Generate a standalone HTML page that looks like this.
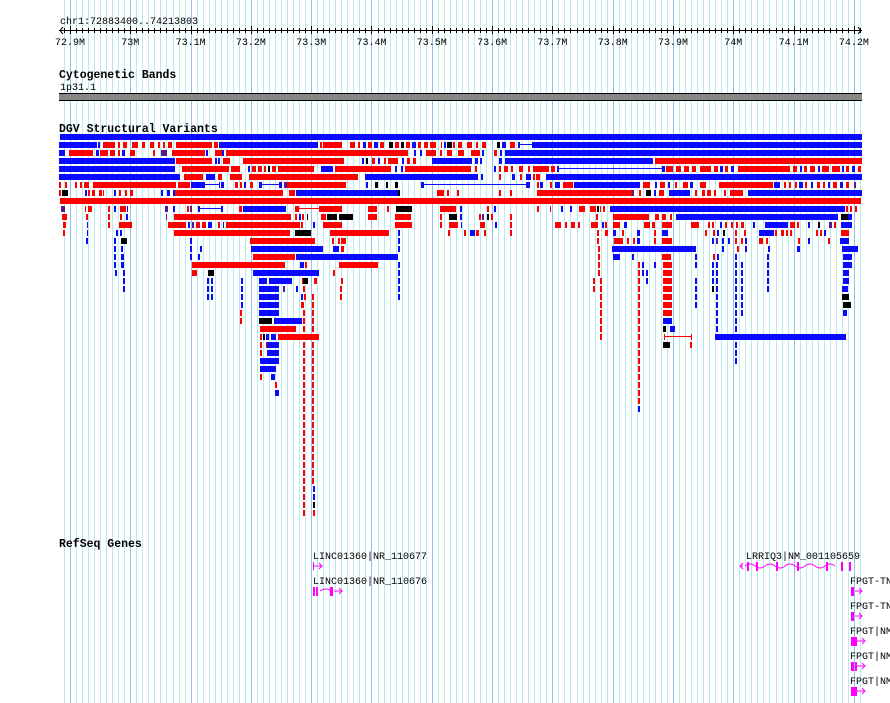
<!DOCTYPE html>
<html><head><meta charset="utf-8">
<style>
html,body{margin:0;padding:0;background:#fff;}
#wrap{position:relative;width:890px;height:703px;overflow:hidden;background:#fff;}
svg{position:absolute;left:0;top:0;}
.t{font-family:"Liberation Mono",monospace;font-size:10px;fill:#000;}
.b{font-family:"Liberation Mono",monospace;font-size:11.5px;font-weight:bold;fill:#000;}
</style></head><body>
<div id="wrap">
<svg id="g" width="890" height="703" xmlns="http://www.w3.org/2000/svg">
<g id="grid"></g>
<g id="bars"></g>
<g id="ruler"></g>
<text class="t" x="60" y="24">chr1:72883400..74213803</text>
<g id="lbl"></g>
<text class="b" x="59" y="78">Cytogenetic Bands</text>
<text class="t" x="60" y="90">1p31.1</text>
<rect x="59" y="93" width="803" height="7" fill="#888"/>
<rect x="59" y="93" width="803" height="1" fill="#000"/>
<rect x="59" y="100" width="803" height="1" fill="#000"/>
<text class="b" x="59" y="132">DGV Structural Variants</text>
<text class="b" x="59" y="547">RefSeq Genes</text>
<text class="t" x="313" y="559">LINC01360|NR_110677</text>
<text class="t" x="313" y="584">LINC01360|NR_110676</text>
<text class="t" x="746" y="559">LRRIQ3|NM_001105659</text>
<text class="t" x="850" y="584">FPGT-TNNI3K</text>
<text class="t" x="850" y="609">FPGT-TNNI3K</text>
<text class="t" x="850" y="634">FPGT|NM_1</text>
<text class="t" x="850" y="659">FPGT|NM_1</text>
<text class="t" x="850" y="684">FPGT|NM_1</text>
<g fill="none" stroke="#f0f" stroke-width="1">
<path d="M313.5 562v8M313 566h9M319 563l3 3-3 3"/>
<path d="M320 591q6-4 11 0M334 591h8M339 588l3 3-3 3"/>
<path d="M740 566h3M740 566l3-3M740 566l3 3M745 566q5-4 10 0q5 4 10 0q5-4 10 0q5 4 10 0q5-4 10 0q5 4 10 0q5-4 10 0q5 4 10 0q5-4 10 0"/>
<path d="M855 591h7M859 588l3 3-3 3M855 616h7M859 613l3 3-3 3M856 641h9M862 638l3 3-3 3M856 666h9M862 663l3 3-3 3M856 691h9M862 688l3 3-3 3"/>
</g>
<g fill="#f0f">
<rect x="313" y="587" width="2" height="9"/><rect x="316" y="587" width="2" height="9"/><rect x="330" y="587" width="3" height="9"/>
<rect x="747" y="562" width="2" height="9"/><rect x="756" y="562" width="2" height="9"/><rect x="776" y="562" width="2" height="9"/><rect x="797" y="562" width="2" height="9"/><rect x="826" y="562" width="2" height="9"/><rect x="841" y="562" width="2" height="9"/><rect x="849" y="562" width="2" height="9"/>
<rect x="851" y="587" width="3" height="9"/><rect x="851" y="612" width="3" height="9"/><rect x="851" y="637" width="6" height="9"/><rect x="851" y="662" width="3" height="9"/><rect x="855" y="662" width="2" height="9"/><rect x="851" y="687" width="6" height="9"/>
</g>
</svg>
</div>
<script>
var NS="http://www.w3.org/2000/svg";
function R(p,x,y,w,h,c){var r=document.createElementNS(NS,"rect");r.setAttribute("x",x);r.setAttribute("y",y);r.setAttribute("width",w);r.setAttribute("height",h);r.setAttribute("fill",c);p.appendChild(r);}
var grid=document.getElementById("grid"),bars=document.getElementById("bars"),rul=document.getElementById("ruler"),lbl=document.getElementById("lbl");
var sp=60.3/10;
for(var k=-2;k<=132;k++){var x=Math.round(70+k*sp);if(x<59||x>862)continue;R(grid,x,0,1,703,(k%10==0)?"#88c4ec":"#b4ecf0");}
R(rul,59,30,803,1,"#000");
for(var k=-1;k<=131;k++){var x=Math.round(70+k*sp);if(x<60||x>861)continue;R(rul,x,(k%10==0)?26:28,1,(k%10==0)?8:5,"#000");}
var t=document.createElementNS(NS,"path");t.setAttribute("d","M63 27l-3 3.5 3 3.5M858 27l3 3.5-3 3.5");t.setAttribute("stroke","#000");t.setAttribute("fill","none");rul.appendChild(t);
var labs=["72.9M","73M","73.1M","73.2M","73.3M","73.4M","73.5M","73.6M","73.7M","73.8M","73.9M","74M","74.1M","74.2M"];
for(var i=0;i<labs.length;i++){var x=70+i*60.3;var e=document.createElementNS(NS,"text");e.setAttribute("class","t");e.setAttribute("x",x);e.setAttribute("y",45);e.setAttribute("text-anchor","middle");e.textContent=labs[i];lbl.appendChild(e);}
var C={b:"#0a0aff",r:"#ff0000",k:"#000",p:"#5a1a90",l:"#0a0aff",m:"#ff0000"};
var rows=[
"60-862b",
"59-97b 98-100b 103-115r 118-120r 123-127r 132-138r 142-145r 150-154r 158-160r 163-165r 168-172r 176-212r 214-218r 219-318b 320-322r 323-342r 350-355r 358-360r 363-366b 368-372r 374-378b 380-384r 389-393k 395-399r 401-404k 406-410r 412-416b 418-421r 424-428r 430-436r 441-442r 444-446b 447-452k 453-455r 458-462r 467-472r 476-478r 482-486r 497-500k 502-506b 510-515r 518-519b 519-533l 533-862b",
"59-65b 69-89r 89-93r 96-99b 100-108r 110-115r 118-120r 122-125b 130-135r 153-155r 161-167p 172-205r 206-208b 215-222r 222-224b 226-408r 414-416b 420-422b 426-436r 440-442r 447-452r 458-464r 471-480r 482-484b 494-497r 500-502b 505-862b",
"59-175b 176-212r 215-217b 218-220b 223-230r 243-320r 320-344r 362-364b 366-368k 372-375r 378-380b 384-386r 388-398r 402-404b 407-410r 413-416r 432-472b 475-478b 480-482b 499-502b 505-653b 655-862r",
"59-175b 182-229r 231-240r 248-250b 252-256r 258-262r 264-266r 268-270k 272-276r 278-314r 321-333b 335-391r 395-397b 401-403b 405-471r 475-477r 494-496b 499-501r 504-508r 511-513r 519-523r 528-530r 533-549r 551-555r 557-558b 558-663l 663-665b 666-673r 676-681r 684-689r 692-696r 700-711r 714-718r 720-723b 725-728r 731-734b 738-790r 793-797r 800-802b 804-807r 810-815r 818-820b 822-829r 832-840r 842-844b 846-849r 852-855b 858-861r",
"59-180b 184-198r 198-203r 206-215b 218-222r 230-242r 249-358r 365-478b 481-483b 499-501r 512-515b 520-522r 526-531b 533-535r 536-540r 546-862b",
"59-61r 65-67r 75-77r 80-82r 84-89r 93-176r 178-190r 191-198b 198-204b 204-220l 221-224b 235-238r 240-242r 244-246b 250-253r 259-261b 261-280l 280-282b 284-287p 287-346r 366-368b 375-378k 386-388k 395-398k 421-423b 423-527l 527-530b 537-539r 540-543b 550-552r 555-560b 563-567r 567-573r 574-640b 643-650r 655-657b 660-665r 668-670b 675-677r 683-688r 690-693b 700-706r 719-773r 774-780b 784-786r 789-791r 795-797r 799-803b 805-807r 811-813b 817-820r 823-825r 828-830b 833-837r 840-843b 846-849r 854-856p",
"59-61r 62-68k 85-87b 88-90r 92-95r 99-102r 103-104r 114-116b 119-121r 125-127r 130-133r 161-163b 167-170b 173-175b 175-283r 289-295r 296-398b 398-400k 437-444r 447-449r 457-459r 499-501r 510-512r 537-632r 632-634p 639-641r 646-651k 654-656b 659-664r 669-690b 695-697r 702-705r 707-711r 714-716r 724-726r 730-743r 748-862b",
"60-861r",
"61-65p 85-86r 88-92r 108-110r 114-116b 120-126r 127-128b 165-168p 173-175b 187-189r 190-192p 198-199b 199-222l 222-223b 239-242r 243-286b 295-298r 298-320m 320-342r 368-377r 387-389r 396-412k 440-456r 460-462b 487-489r 494-496b 537-539r 550-551r 561-563b 570-572b 579-585r 590-596r 597-599k 600-601r 603-605r 610-845b 846-848r 850-852r 855-857r",
"62-67r 86-88r 108-110r 120-122r 126-128b 166-167p 174-291r 295-297r 299-301b 302-304r 307-308k 321-326r 327-337k 339-353k 368-377r 395-411r 440-442r 449-457k 460-462b 479-481r 482-484p 487-489k 491-493r 510-512r 596-598r 613-649r 655-659r 662-666r 670-672r 676-838b 841-849k 848-852b",
"63-66r 87-88b 108-110r 119-132r 168-186r 188-190b 192-194p 196-200r 202-206r 208-212b 218-220r 223-224b 226-300r 301-303r 313-315b 323-342r 395-412r 440-442r 449-458r 461-462b 480-485r 495-497b 510-512r 555-561r 565-567r 571-575r 578-580r 591-598r 602-604b 605-607r 613-620r 624-627b 644-650r 652-655r 662-672r 691-699r 708-710r 712-714r 720-722b 725-727r 731-733r 736-738r 741-744r 753-755b 765-788b 790-795r 797-799r 808-810b 818-820k 829-832p 834-836r 841-852b",
"63-65r 87-88b 116-118b 120-122b 174-290r 295-311k 330-389r 398-400b 448-450r 464-466r 470-475b 476-478r 477-479r 484-486r 510-512r 597-599r 605-608r 613-616b 622-624r 637-640b 654-656r 662-668b 705-707r 713-715r 717-719b 723-725k 735-737r 744-746r 759-774b 775-777r 781-784r 786-788r 790-792r 816-818r 820-822r 824-826b 841-849r",
"86-88b 114-116b 121-127k 190-192b 250-315r 332-334r 338-340r 341-346r 398-400b 597-599r 614-623r 627-629r 633-635r 637-640b 654-656r 662-672r 712-714b 716-718p 722-724b 728-730b 735-737r 741-743r 745-747b 759-763r 766-768r 798-800r 808-810b 828-830r 840-849b",
"114-116b 121-123b 190-192b 200-202b 251-323b 333-339b 341-344r 398-400b 598-600r 612-696b 722-724b 737-739r 745-747b 768-770b 797-800b 842-858b",
"114-116b 121-124b 190-192b 198-200b 253-295r 296-398b 598-600r 613-620b 632-634b 662-671r 695-697b 713-715r 717-719b 735-737b 767-769b 843-852b",
"114-116b 121-124b 192-285r 300-304b 305-307r 339-378r 398-400b 598-600r 638-640r 642-644b 654-656b 663-672r 695-697b 712-714b 716-718b 735-737b 741-743b 767-769b 843-852b",
"115-117b 123-125b 192-197r 208-214k 253-319b 333-335r 398-400b 598-600r 638-640r 642-644b 646-648b 663-672r 712-714b 716-718b 735-737b 741-743b 767-769b 843-849b",
"123-125b 207-209b 211-213b 241-243b 259-267b 269-292b 302-302r 303-308k 314-317r 341-343r 398-400b 593-595r 600-602r 638-640r 646-648b 663-672r 695-697b 712-714b 716-718b 735-737b 741-743b 767-769b 843-849b",
"123-125b 207-209b 211-213b 241-243b 259-279b 283-285p 296-298b 303-305r 340-342r 398-400b 593-595r 600-602r 638-640r 663-672r 695-697b 712-714k 716-718b 735-737b 741-743b 767-769b 842-848b",
"207-209b 211-213b 241-243b 259-279b 301-303b 304-306r 312-314r 340-342r 398-400b 600-602r 638-640r 663-672r 695-697b 716-718b 735-737b 741-743b 842-849k",
"241-243b 259-279b 301-304r 312-314r 600-602r 638-640r 663-672r 695-697b 716-718b 735-737b 741-743b 843-851k",
"240-242r 259-279b 303-305r 312-314r 600-602r 638-640r 663-672r 716-718b 735-737b 741-743b 843-847b",
"240-242r 259-272k 274-302b 303-305r 312-314r 600-602r 638-640r 663-672b 716-718b 735-737b",
"260-296r 303-305r 312-314r 600-602r 638-640r 663-666k 670-675b 716-718b 735-737b",
"260-262r 263-265k 266-269b 271-276b 278-319r 312-314r 600-602r 638-640r 664-692m 715-846b 735-737b",
"260-262r 266-268r 269-271r 267-279b 303-305r 312-314r 638-640r 663-670k 690-692r 735-737b",
"260-262r 267-279b 303-305r 312-314r 638-640r 735-737b",
"260-279b 303-305r 312-314r 638-640r 735-737b",
"260-276b 303-305r 312-314r 638-640r",
"260-262r 271-275b 303-305r 312-314r 638-640r",
"275-277r 303-305r 312-314r 638-640r",
"275-279b 303-305r 312-314r 638-640r",
"303-305r 312-314r 638-640r",
"303-305r 312-314r 638-640b",
"303-305r 312-314r",
"303-305r 312-314r",
"303-305r 312-314r",
"303-305r 312-314r",
"303-305r 312-314r",
"303-305r 312-314r",
"303-305r 312-314r",
"303-305r 312-314r",
"303-305r 312-314r",
"303-305r 313-315b",
"303-305r 313-315b",
"303-305r 313-315k",
"303-305r 313-315r"
];
for(var r=0;r<rows.length;r++){var y=134+8*r;var items=rows[r].split(" ");
for(var j=0;j<items.length;j++){var m=items[j].match(/(\d+)-(\d+)(\w)/);if(!m)continue;var a=+m[1],b=+m[2],c=m[3];
if(c=="l"||c=="m"){R(bars,a,y+2,b-a,1,C[c]);R(bars,a,y,1,6,C[c]);R(bars,b-1,y,1,6,C[c]);}
else R(bars,a,y,Math.max(1,b-a),6,C[c]);}}
</script>
</body></html>
